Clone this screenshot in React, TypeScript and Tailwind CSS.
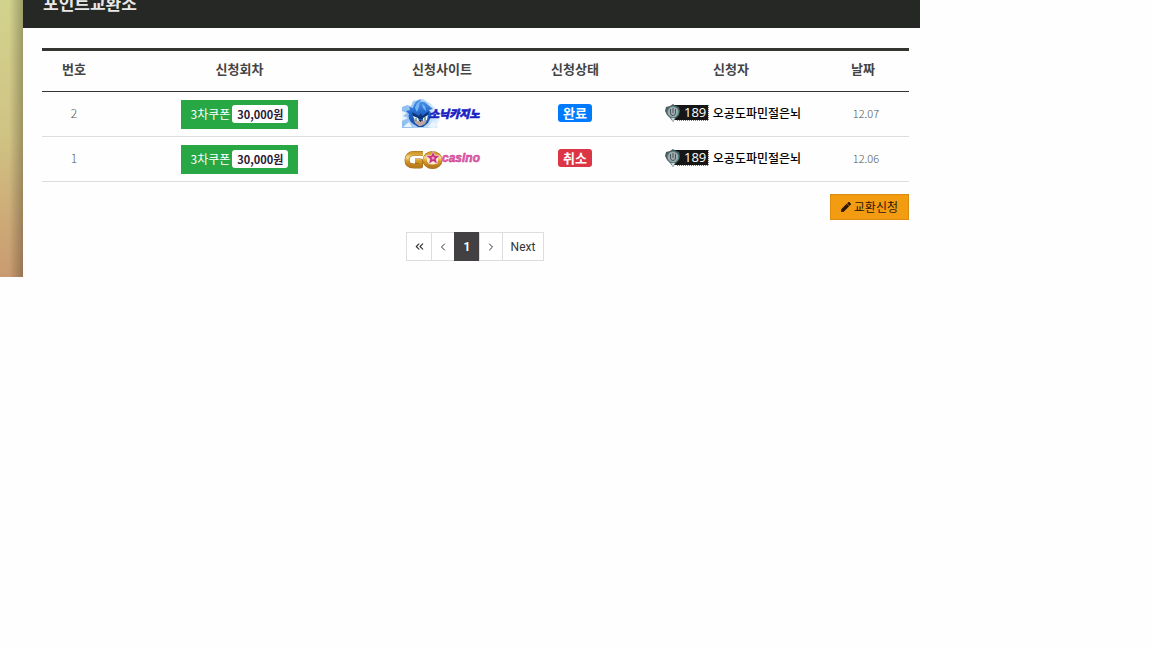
import { ChevronLeft, ChevronRight, ChevronsLeft } from "lucide-react";
import { FaPen } from "react-icons/fa";

type Request = {
  id: number;
  coupon: string;
  amount: string;
  site: "sonic" | "go";
  status: "완료" | "취소";
  level: number;
  user: string;
  date: string;
};

const requests: Request[] = [
  {
    id: 2,
    coupon: "3차쿠폰",
    amount: "30,000원",
    site: "sonic",
    status: "완료",
    level: 189,
    user: "오공도파민절은뇌",
    date: "12.07",
  },
  {
    id: 1,
    coupon: "3차쿠폰",
    amount: "30,000원",
    site: "go",
    status: "취소",
    level: 189,
    user: "오공도파민절은뇌",
    date: "12.06",
  },
];

const SonicLogo = () => (
  <svg width="82" height="30" viewBox="0 0 82 30" className="mx-auto block">
    <defs>
      <linearGradient id="sonic-sky" x1="0" y1="0" x2="1" y2="0">
        <stop offset="0" stopColor="#8cbcf0" />
        <stop offset="0.7" stopColor="#bcdcf8" />
        <stop offset="1" stopColor="#eef6fe" />
      </linearGradient>
      <linearGradient id="sonic-head" x1="0" y1="0" x2="0" y2="1">
        <stop offset="0" stopColor="#4f9aec" />
        <stop offset="0.5" stopColor="#2268cd" />
        <stop offset="1" stopColor="#164a9f" />
      </linearGradient>
    </defs>
    <path d="M1 8l5-2 4 1 2-5 10-2 8 5 5 5v8l4 3-3 4 1 4H1z" fill="url(#sonic-sky)" />
    <path d="M1 12l5 2-4 3 5 2-6 3zM2 28l6-5 3 5zM27 28l5-6 4 3-3 4z" fill="#e9f4fe" />
    <path
      d="M8 8l4 1c1-5 4-8 8-9l-1 3c3-1 6 0 8 3l5 4-4 1c3 3 3 6 1 9l-2 4-5 4h-5l-6-4c-3-3-4-6-3-9L5 12l4-1z"
      fill="url(#sonic-head)"
    />
    <path d="M14 9c1-4 3-6 5-7l-1 6-2 5zM21 5c3 1 4 4 4 7l-3-3z" fill="#77b5f5" />
    <path d="M11 13l7 4 2-3 1 3 7-5-1 5-6 3h-3l-6-3z" fill="#0e3478" />
    <path d="M12 17l5 2 1 3h-4zM27 16l-5 3v3l4-1z" fill="#eef6ff" />
    <path d="M13 21l5 1 2-1 2 1 4-1-2 4-4 2h-2l-4-3z" fill="#bda5a0" />
    <path d="M18 21h3l-1.500 2z" fill="#101a33" />
    <path d="M15 19v3M24 18v3" stroke="#27604c" />
    <text
      x="28"
      y="19"
      fontSize="11"
      fontWeight="900"
      fontStyle="italic"
      fill="#1a22c4"
      stroke="#1a22c4"
      strokeWidth="0.6"
    >
      소닉카지노
    </text>
  </svg>
);

const GoLogo = () => (
  <svg width="78" height="24" viewBox="0 0 78 24" className="mx-auto block">
    <defs>
      <linearGradient id="gold" x1="0" y1="0" x2="0" y2="1">
        <stop offset="0" stopColor="#d19a2c" />
        <stop offset="0.3" stopColor="#f8dc86" />
        <stop offset="0.6" stopColor="#d59a28" />
        <stop offset="1" stopColor="#b87a1c" />
      </linearGradient>
    </defs>
    <g fill="none" strokeLinejoin="round">
      <path
        d="M20 6.500H11C6.500 6.500 4 9 4 13s2.500 6 7 6h6.500v-5H12"
        stroke="#a36c18"
        strokeWidth="5"
      />
      <path
        d="M20 6.500H11C6.500 6.500 4 9 4 13s2.500 6 7 6h6.500v-5H12"
        stroke="url(#gold)"
        strokeWidth="3.800"
      />
      <ellipse cx="29.500" cy="13" rx="7.500" ry="6.500" stroke="#a36c18" strokeWidth="5" />
      <ellipse cx="29.500" cy="13" rx="7.500" ry="6.500" fill="#fdf0cc" stroke="url(#gold)" strokeWidth="3.800" />
    </g>
    <path
      d="M30 4l1.800 4.500 5.200.3-4 3.200 1.300 5-4.300-2.800-4.300 2.800 1.300-5-4-3.200 5.200-.3z"
      fill="#c2307f"
      stroke="#f8d5ea"
      strokeWidth="0.6"
    />
    <circle cx="30" cy="11" r="1.500" fill="#f39bcb" />
    <text
      x="39"
      y="15"
      fontSize="12"
      fontWeight="700"
      fontStyle="italic"
      fontFamily="Liberation Sans, sans-serif"
      fill="#ea62b0"
      stroke="#c43a8c"
      strokeWidth="0.5"
    >
      casino
    </text>
  </svg>
);

const LevelBadge = ({ level }: { level: number }) => (
  <svg width="45" height="18" viewBox="0 0 45 18" className="shrink-0">
    <rect x="9" y="1" width="34" height="15" fill="#161616" />
    <path d="M12 16.500h32M43.500 1v16" stroke="#777" strokeDasharray="1 1" />
    <path
      d="M8 0l3 2 3 1 1 4-1 4-3 3-3 4-3-4-3-3-2-4 1-4 4-1z"
      fill="#4b5b5e"
    />
    <circle cx="8" cy="8" r="5.500" fill="#a3acae" stroke="#3f8d8b" strokeDasharray="5 3" />
    <path d="M5.500 5v4a2.500 2.500 0 0 0 5 0V5M8 4v5" fill="none" stroke="#485558" />
    <path d="M6 14l2 4 2-4z" fill="#cdd4d4" />
    <text
      x="19"
      y="13"
      fontSize="13"
      fontFamily="Open Sans, sans-serif"
      fill="#fff"
    >
      {level}
    </text>
  </svg>
);

const RequestRow = ({ request }: { request: Request }) => (
  <tr className="h-[45px] border-b border-[#dddddd]">
    <td className="pb-[2px] font-light text-[#555]">{request.id}</td>
    <td>
      <button className="mx-auto flex h-[29px] items-center gap-[2px] bg-[#28a745] px-[10px] text-[12px] text-white">
        {request.coupon}
        <span className="flex h-[18px] items-center rounded-[3px] bg-white px-[5px] text-[11px] font-bold text-[#2b1a38]">
          {request.amount}
        </span>
      </button>
    </td>
    <td>{request.site === "sonic" ? <SonicLogo /> : <GoLogo />}</td>
    <td className="pb-[2px]">
      <span
        className={`mx-auto flex h-[18px] w-[34px] items-center justify-center rounded-[3px] text-[13px] font-bold text-white ${
          request.status === "완료" ? "bg-[#007bff]" : "bg-[#dc3545]"
        }`}
      >
        {request.status}
      </span>
    </td>
    <td className="pb-[2px]">
      <div className="flex items-center justify-center gap-[3px] pl-1 text-[12px] font-medium text-black">
        <LevelBadge level={request.level} />
        {request.user}
      </div>
    </td>
    <td className="pb-[2px] text-[11px] font-light text-[#555]">{request.date}</td>
  </tr>
);

const pageLink =
  "-ml-px flex h-[29px] items-center justify-center border border-[#dddddd] bg-white";

const Pagination = () => (
  <nav
    aria-label="페이지"
    className="mt-3 flex justify-center font-['Roboto','Noto_Sans_CJK_KR',sans-serif] text-[12px] text-[#333]"
  >
    <a href="#first" aria-label="처음" className={`${pageLink} w-[26px]`}>
      <ChevronsLeft size={13} />
    </a>
    <a href="#prev" aria-label="이전" className={`${pageLink} w-6`}>
      <ChevronLeft size={12} />
    </a>
    <a
      href="#1"
      aria-current="page"
      className="-ml-px flex h-[29px] w-[26px] items-center justify-center bg-[#434043] font-bold text-white"
    >
      1
    </a>
    <a href="#next" aria-label="다음" className={`${pageLink} w-6`}>
      <ChevronRight size={12} />
    </a>
    <a href="#last" className={`${pageLink} w-[42px]`}>
      Next
    </a>
  </nav>
);

export default function App() {
  return (
    <div className="min-h-screen bg-[#fefefe] font-['Noto_Sans_CJK_KR',sans-serif]">
      <div className="mr-[232px] flex">
        <aside className="w-[23px] shrink-0 bg-linear-to-b from-[#d2d38d] via-[#d0c283] to-[#c99a70]">
          <div className="h-full bg-linear-to-r from-transparent from-40% to-black/25" />
        </aside>
        <main className="min-w-0 flex-1">
          <header className="flex h-7 items-end overflow-hidden bg-[#262825] px-5 pb-[15px]">
            <h1 className="text-[17px] leading-5 font-bold text-[#e8e8e8]">
              포인트교환소
            </h1>
          </header>
          <div className="pt-5 pr-[11px] pb-4 pl-[19px]">
            <table className="w-full table-fixed border-collapse text-center text-[12px]">
              <colgroup>
                <col className="w-16" />
                <col />
                <col className="w-[138px]" />
                <col className="w-[128px]" />
                <col className="w-[184px]" />
                <col className="w-[86px]" />
              </colgroup>
              <thead>
                <tr className="h-[42px] border-t-3 border-b border-t-[#333531] border-b-[#333531] text-[13px] text-[#444] *:pb-1">
                  <th>번호</th>
                  <th>신청회차</th>
                  <th>신청사이트</th>
                  <th>신청상태</th>
                  <th>신청자</th>
                  <th className="pr-[6px]">날짜</th>
                </tr>
              </thead>
              <tbody>
                {requests.map((request) => (
                  <RequestRow key={request.id} request={request} />
                ))}
              </tbody>
            </table>
            <div className="mt-3 flex justify-end">
              <button className="flex h-[26px] items-center gap-[3px] border border-[#dc8c0c] bg-[#f39c12] px-[10px] text-[12px] text-[#2b1608]">
                <FaPen size={10} />
                교환신청
              </button>
            </div>
            <Pagination />
          </div>
        </main>
      </div>
    </div>
  );
}
